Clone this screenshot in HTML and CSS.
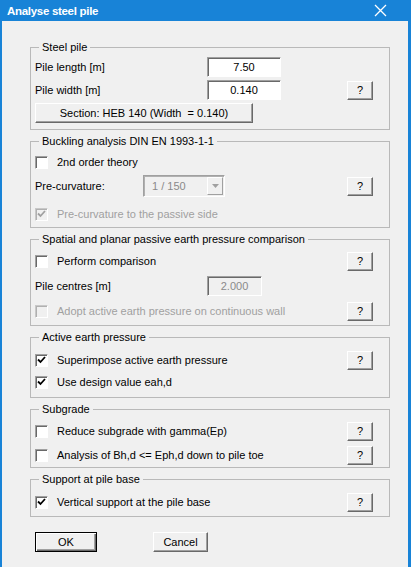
FILE: index.html
```html
<!DOCTYPE html>
<html>
<head>
  <title>Analyse steel pile</title>
  <link rel="stylesheet" href="styles.css">
</head>
<body>
  <div class="window">
    <div class="titlebar">
      <span class="title">Analyse steel pile</span>
      <svg class="close" width="13" height="13" viewBox="0 0 13 13">
        <path d="M1 1 L12 12 M12 1 L1 12" stroke="#fff" stroke-width="1.3" fill="none"/>
      </svg>
    </div>

    <div class="client">
      <fieldset class="group group-pile">
        <legend>Steel pile</legend>
        <div class="row">
          <span class="label">Pile length [m]</span>
          <input class="edit" type="text" value="7.50">
        </div>
        <div class="row">
          <span class="label">Pile width [m]</span>
          <input class="edit" type="text" value="0.140">
          <button class="btn help">?</button>
        </div>
        <div class="row">
          <button class="btn section">Section: HEB 140 (Width&nbsp; = 0.140)</button>
        </div>
      </fieldset>

      <fieldset class="group group-buckling">
        <legend>Buckling analysis DIN EN 1993-1-1</legend>
        <div class="row">
          <span class="check"></span>
          <span>2nd order theory</span>
        </div>
        <div class="row">
          <span class="label label-short">Pre-curvature:</span>
          <span class="combo">
            <span class="combo-text">1 / 150</span>
            <span class="combo-arrow">
              <svg width="7" height="4" viewBox="0 0 7 4"><path d="M0 0 H7 L3.5 4 Z" fill="#a0a0a0"/></svg>
            </span>
          </span>
          <button class="btn help">?</button>
        </div>
        <div class="row row-spaced disabled">
          <span class="check check-off">
            <svg width="9" height="8" viewBox="0 0 9 8"><path d="M1 3.5 L3.5 6 L8 1" stroke="#a0a0a0" stroke-width="1.8" fill="none"/></svg>
          </span>
          <span>Pre-curvature to the passive side</span>
        </div>
      </fieldset>

      <fieldset class="group group-spatial">
        <legend>Spatial and planar passive earth pressure comparison</legend>
        <div class="row">
          <span class="check"></span>
          <span>Perform comparison</span>
          <button class="btn help">?</button>
        </div>
        <div class="row">
          <span class="label">Pile centres [m]</span>
          <input class="edit edit-small" type="text" value="2.000" disabled>
        </div>
        <div class="row disabled">
          <span class="check check-off"></span>
          <span>Adopt active earth pressure on continuous wall</span>
          <button class="btn help">?</button>
        </div>
      </fieldset>

      <fieldset class="group group-active">
        <legend>Active earth pressure</legend>
        <div class="row">
          <span class="check">
            <svg width="9" height="8" viewBox="0 0 9 8"><path d="M1 3.5 L3.5 6 L8 1" stroke="#000" stroke-width="1.8" fill="none"/></svg>
          </span>
          <span>Superimpose active earth pressure</span>
          <button class="btn help">?</button>
        </div>
        <div class="row">
          <span class="check">
            <svg width="9" height="8" viewBox="0 0 9 8"><path d="M1 3.5 L3.5 6 L8 1" stroke="#000" stroke-width="1.8" fill="none"/></svg>
          </span>
          <span>Use design value eah,d</span>
        </div>
      </fieldset>

      <fieldset class="group group-subgrade">
        <legend>Subgrade</legend>
        <div class="row">
          <span class="check"></span>
          <span>Reduce subgrade with gamma(Ep)</span>
          <button class="btn help">?</button>
        </div>
        <div class="row">
          <span class="check"></span>
          <span>Analysis of Bh,d &lt;= Eph,d down to pile toe</span>
          <button class="btn help">?</button>
        </div>
      </fieldset>

      <fieldset class="group group-support">
        <legend>Support at pile base</legend>
        <div class="row">
          <span class="check">
            <svg width="9" height="8" viewBox="0 0 9 8"><path d="M1 3.5 L3.5 6 L8 1" stroke="#000" stroke-width="1.8" fill="none"/></svg>
          </span>
          <span>Vertical support at the pile base</span>
          <button class="btn help">?</button>
        </div>
      </fieldset>

      <div class="actions">
        <button class="btn btn-default ok">OK</button>
        <button class="btn cancel">Cancel</button>
      </div>
    </div>
  </div>
</body>
</html>
```

FILE: styles.css
```css
* {
  box-sizing: border-box;
}

html, body {
  margin: 0;
  height: 100%;
}

body {
  font-family: "Liberation Sans", Arial, sans-serif;
  font-size: 11px;
  color: #000;
  background-color: #1883d7;
}

.window {
  height: 567px;
  display: flex;
  flex-direction: column;
}

.titlebar {
  height: 21px;
  display: flex;
  align-items: center;
  padding-left: 7px;
  color: #fff;
}

.title {
  font-weight: bold;
  font-size: 11.5px;
  letter-spacing: -0.3px;
}

.close {
  margin-left: auto;
  margin-right: 24px;
}

.client {
  flex: 1;
  margin: 0 3px 0 2px;
  padding: 19px 18px 0 28px;
  background-color: #f0f0f0;
}

/* group boxes */
.group {
  display: flex;
  flex-direction: column;
  margin: 4px 0 0 0;
  padding: 4px 16px 4px 4px;
  border: 1px solid #b9b9b9;
  min-width: 0;
}

.group legend {
  margin-left: 4px;
  padding: 0 3px;
  line-height: 14px;
}

.group-pile {
  margin-top: 0;
  padding-top: 3px;
  padding-bottom: 6px;
  gap: 3px;
}

.group-buckling {
  padding-bottom: 3px;
  gap: 4px;
}

.group-spatial {
  padding-top: 5px;
  gap: 5px;
}

.group-active {
  padding-top: 6px;
  padding-bottom: 5px;
  gap: 2px;
}

.group-subgrade {
  padding-top: 5px;
  padding-bottom: 2px;
  gap: 4px;
}

.group-support {
  padding-top: 6px;
}

.row {
  display: flex;
  align-items: center;
  height: 20px;
}

.row-spaced {
  margin-top: 4px;
}

.disabled {
  color: #a0a0a0;
}

.label {
  width: 172px;
}

.label-short {
  width: 108px;
}

/* sunken controls */
.edit {
  width: 74px;
  height: 20px;
  padding: 0;
  font: inherit;
  text-align: center;
  color: #000;
  background-color: #fff;
  border: 1px solid;
  border-color: #a0a0a0 #fff #fff #a0a0a0;
  box-shadow: inset 1px 1px 0 #696969;
  outline: none;
}

.edit-small {
  width: 55px;
}

.edit:disabled {
  background-color: #f0f0f0;
  color: #8a8a8a;
}

.check {
  width: 13px;
  height: 13px;
  margin-right: 9px;
  display: flex;
  align-items: center;
  justify-content: center;
  background-color: #fff;
  border: 1px solid;
  border-color: #a0a0a0 #fff #fff #a0a0a0;
  box-shadow: inset 1px 1px 0 #696969;
}

.check-off {
  background-color: #f0f0f0;
  border-color: #c8c8c8 #fff #fff #c8c8c8;
  box-shadow: inset 1px 1px 0 #b0b0b0;
}

.combo {
  width: 82px;
  height: 22px;
  display: flex;
  align-items: center;
  background-color: #f0f0f0;
  border: 1px solid;
  border-color: #a0a0a0 #fff #fff #a0a0a0;
  box-shadow: inset 1px 1px 0 #b0b0b0;
  color: #8a8a8a;
}

.combo-text {
  flex: 1;
  padding-left: 8px;
}

.combo-arrow {
  width: 16px;
  height: 18px;
  margin-right: 1px;
  display: flex;
  align-items: center;
  justify-content: center;
  border: 1px solid;
  border-color: #fff #a0a0a0 #a0a0a0 #fff;
}

/* raised buttons */
.btn {
  padding: 0;
  font: inherit;
  color: #000;
  background-color: #f0f0f0;
  border: 1px solid;
  border-color: #fff #696969 #696969 #fff;
  box-shadow: inset -1px -1px 0 #a0a0a0;
}

.help {
  width: 26px;
  height: 19px;
  margin-left: auto;
}

.section {
  width: 218px;
  height: 20px;
}

.btn-default {
  border: 1px solid #000;
  box-shadow: inset 1px 1px 0 #fff, inset -1px -1px 0 #696969, inset -2px -2px 0 #a0a0a0;
}

.actions {
  display: flex;
  gap: 56px;
  margin-top: 15px;
  padding-left: 5px;
}

.ok {
  width: 62px;
  height: 20px;
}

.cancel {
  width: 55px;
  height: 20px;
}
```
